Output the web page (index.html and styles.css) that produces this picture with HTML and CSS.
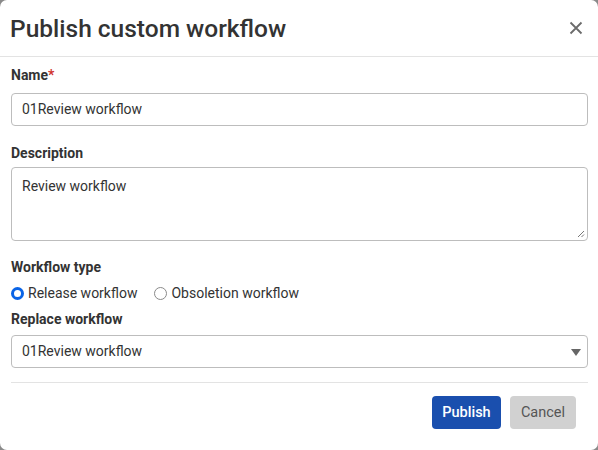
FILE: index.html
```html
<!DOCTYPE html>
<html>
<head>
<meta charset="utf-8">
<link rel="stylesheet" href="styles.css">
</head>
<body>
<div class="dialog">
  <div class="header">
    <h1 class="title">Publish custom workflow</h1>
    <button class="close" aria-label="Close">
      <svg width="14" height="14" viewBox="0 0 14 14"><path d="M1.5 1.5 L12.5 12.5 M12.5 1.5 L1.5 12.5" stroke="#6b6b6b" stroke-width="1.8" fill="none"/></svg>
    </button>
  </div>
  <div class="body">
    <label class="label">Name<span class="req">*</span></label>
    <div class="input">01Review workflow</div>
    <label class="label desc-label">Description</label>
    <div class="textarea">Review workflow
      <svg class="grip" width="8" height="8" viewBox="0 0 8 8"><path d="M7 1 L1 7 M7 4.5 L4.5 7" stroke="#777" stroke-width="1" fill="none"/></svg>
    </div>
    <label class="label type-label">Workflow type</label>
    <div class="radios">
      <span class="radio-item"><span class="radio checked"></span>Release workflow</span>
      <span class="radio-item"><span class="radio"></span>Obsoletion workflow</span>
    </div>
    <label class="label replace-label">Replace workflow</label>
    <div class="select">01Review workflow
      <svg class="caret" width="10" height="7" viewBox="0 0 10 7"><path d="M0 0 L10 0 L5 7 Z" fill="#666"/></svg>
    </div>
    <div class="divider"></div>
    <div class="footer">
      <button class="btn primary">Publish</button>
      <button class="btn secondary">Cancel</button>
    </div>
  </div>
</div>
</body>
</html>
```
FILE: styles.css
```css
html, body {
  margin: 0;
  padding: 0;
  background: #8a8a8a;
  width: 598px;
  height: 450px;
  overflow: hidden;
}
.dialog {
  width: 598px;
  height: 450px;
  background: #fff;
  border-radius: 7px;
  box-sizing: border-box;
  font-family: Roboto, "Noto Sans", "Liberation Sans", sans-serif;
  color: #333;
  display: flex;
  flex-direction: column;
}
.header {
  height: 56px;
  border-bottom: 1px solid #e3e3e3;
  display: flex;
  align-items: center;
  justify-content: space-between;
  padding: 0 15px 0 10px;
}
.title {
  margin: 0;
  font-size: 24.5px;
  font-weight: 500;
  color: #333;
}
.close {
  border: none;
  background: none;
  padding: 0;
  width: 14px;
  height: 14px;
  display: flex;
  margin-top: -1px;
}
.body {
  padding: 8px 10px 0 11px;
  display: flex;
  flex-direction: column;
}
.label {
  font-size: 14px;
  font-weight: 700;
  color: #333;
  line-height: 20px;
  height: 20px;
}
.req { color: #d0312d; }
.input, .select, .textarea {
  border: 1px solid #bdbdbd;
  border-radius: 4px;
  font-size: 14px;
  color: #333;
  box-sizing: border-box;
  width: 577px;
  padding: 0 10px;
}
.input {
  height: 33px;
  line-height: 31px;
  margin-top: 8px;
}
.desc-label { margin-top: 17px; }
.textarea {
  height: 74px;
  margin-top: 4px;
  padding-top: 8px;
  line-height: 20px;
  position: relative;
}
.grip {
  position: absolute;
  right: 2px;
  bottom: 2px;
}
.type-label { margin-top: 16px; }
.radios {
  display: flex;
  gap: 17px;
  margin-top: 6px;
  font-size: 14px;
  line-height: 20px;
  height: 20px;
  color: #333;
}
.radio-item {
  display: flex;
  align-items: center;
  gap: 4px;
}
.radio {
  width: 13px;
  height: 13px;
  border-radius: 50%;
  border: 1px solid #8a8a8a;
  box-sizing: border-box;
}
.radio.checked {
  border: 3.5px solid #0a64e6;
}
.replace-label { margin-top: 6px; }
.select {
  height: 33px;
  line-height: 31px;
  margin-top: 6px;
  position: relative;
}
.caret {
  position: absolute;
  right: 6px;
  top: 13px;
}
.divider {
  height: 1px;
  background: #e3e3e3;
  margin-top: 14px;
  width: 577px;
}
.footer {
  display: flex;
  justify-content: flex-end;
  gap: 9px;
  margin-top: 13px;
  padding-right: 12px;
}
.btn {
  height: 33px;
  border: none;
  border-radius: 4px;
  font-family: Roboto, "Noto Sans", "Liberation Sans", sans-serif;
  font-size: 14.5px;
  padding: 0 8px;
}
.primary {
  background: #1a4fae;
  color: #fff;
  font-weight: 500;
  width: 69px;
}
.secondary {
  background: #d1d1d1;
  color: #555;
  width: 66px;
}
```
